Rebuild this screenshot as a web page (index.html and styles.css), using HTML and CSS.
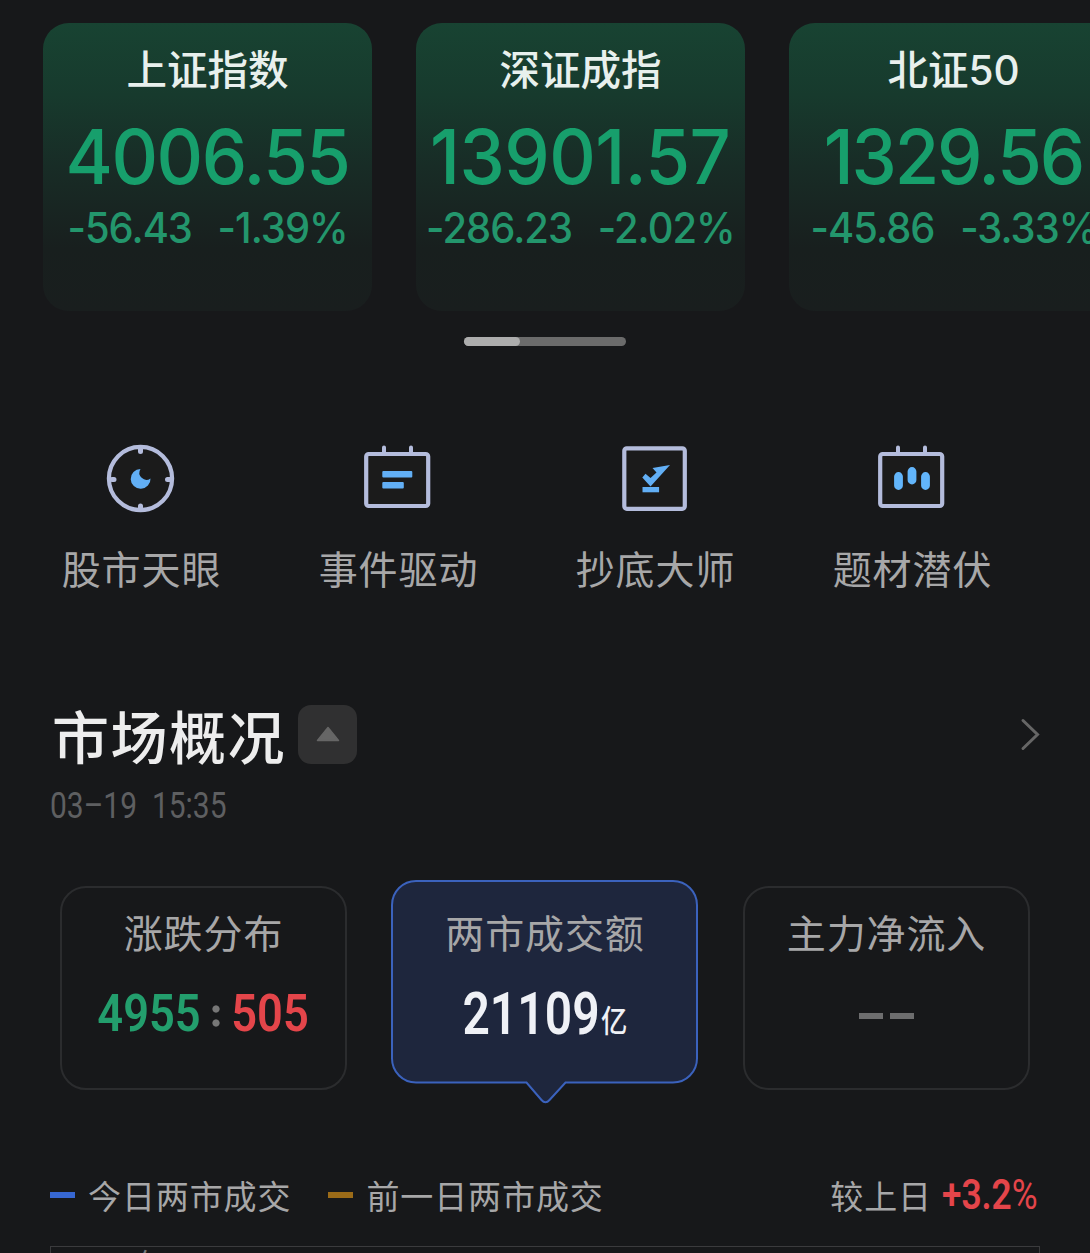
FILE: index.html
```html
<!DOCTYPE html>
<html lang="zh-CN">
<head>
<meta charset="utf-8">
<title>市场概况</title>
<link rel="stylesheet" href="styles.css">
</head>
<body>
<main class="page">
  <section class="indices">
    <article class="index-card">
      <h2 class="index-name">上证指数</h2>
      <div class="index-value"><span>4006.55</span></div>
      <div class="index-change"><span>-56.43</span><span>-1.39%</span></div>
    </article>
    <article class="index-card">
      <h2 class="index-name">深证成指</h2>
      <div class="index-value index-value-long"><span>13901.57</span></div>
      <div class="index-change"><span>-286.23</span><span>-2.02%</span></div>
    </article>
    <article class="index-card">
      <h2 class="index-name">北证50</h2>
      <div class="index-value index-value-tight"><span>1329.56</span></div>
      <div class="index-change"><span>-45.86</span><span>-3.33%</span></div>
    </article>
  </section>
  <div class="scroll-track"><div class="scroll-thumb"></div></div>

  <nav class="tools">
    <a class="tool">
      <svg class="tool-icon" viewBox="0 0 76 76">
        <circle class="frame" cx="38.500" cy="38.500" r="31.600"/>
        <path class="tick" d="M38.500 9.500v2M38.500 66v2M10 39.500h2M65.500 39.500h2"/>
        <path class="fill" d="M38.500 29a9.900 9.900 0 1 0 10 9.400A7 7 0 0 1 38.500 29z"/>
      </svg>
      <span>股市天眼</span>
    </a>
    <a class="tool">
      <svg class="tool-icon" viewBox="0 0 76 76">
        <rect class="frame" x="7.200" y="14" width="62" height="52" rx="2.500"/>
        <path class="pin" d="M25 7.500v6.500M52 7.500v6.500"/>
        <path class="fill" d="M24.300 31h28q1 0 1 1v4.600q0 1-1 1h-28q-1 0-1-1V32q0-1 1-1zM24.300 42h19.500q1 0 1 1v4.400q0 1-1 1H24.300q-1 0-1-1V43q0-1 1-1z"/>
      </svg>
      <span>事件驱动</span>
    </a>
    <a class="tool">
      <svg class="tool-icon" viewBox="0 0 76 76">
        <rect class="frame" x="8.300" y="8.300" width="60.500" height="60.500" rx="2.500"/>
        <path class="fill" d="M26.500 47h16.600v5.300H26.500z"/>
        <path class="fill" d="M26.300 37.500l3.200-3.800 5 4.200 6-5.500-4-4.500 17.500-3-19.500 21.500z"/>
      </svg>
      <span>抄底大师</span>
    </a>
    <a class="tool">
      <svg class="tool-icon" viewBox="0 0 76 76">
        <rect class="frame" x="7.200" y="14" width="62" height="52" rx="2.500"/>
        <path class="pin" d="M25 7.500v6.500M52 7.500v6.500"/>
        <path class="candles" d="M25.500 36.500v9M39 31.500v8.500M52.500 36.500v9"/>
      </svg>
      <span>题材潜伏</span>
    </a>
  </nav>

  <header class="section-head">
    <h1 class="section-title">市场概况</h1>
    <button class="collapse" aria-label="收起">
      <svg viewBox="0 0 24 16" width="24" height="16"><path d="M12 1.500L22.500 14.500H1.500z"/></svg>
    </button>
    <svg class="chevron" viewBox="0 0 20 34" width="20" height="34"><path d="M3 3.500L17.500 17.500 3 31.500"/></svg>
  </header>
  <div class="timestamp"><span>03–19&nbsp; 15:35</span></div>

  <section class="stats">
    <article class="stat">
      <h3 class="stat-name">涨跌分布</h3>
      <div class="ratio"><span class="num up">4955</span><i class="colon"></i><span class="num down">505</span></div>
    </article>
    <article class="stat stat-active">
      <svg class="bubble" viewBox="0 0 308 225" width="308" height="225">
        <path d="M25 1H282a24 24 0 0 1 24 24V178.500a24 24 0 0 1-24 24H174.500L158.500 220q-4 4.500-8 0L135.500 202.500H25a24 24 0 0 1-24-24V25A24 24 0 0 1 25 1z"/>
      </svg>
      <h3 class="stat-name">两市成交额</h3>
      <div class="turnover"><span class="amount">21109</span><span class="unit">亿</span></div>
    </article>
    <article class="stat">
      <h3 class="stat-name">主力净流入</h3>
      <div class="empty"><i></i><i></i></div>
    </article>
  </section>

  <div class="legend">
    <i class="swatch today"></i><span class="legend-text">今日两市成交</span>
    <i class="swatch previous"></i><span class="legend-text">前一日两市成交</span>
    <span class="legend-text compare">较上日</span><span class="delta">+3.2<span class="percent">%</span></span>
  </div>
  <div class="chart"><span class="axis-label">30000亿</span></div>
</main>
</body>
</html>
```
FILE: styles.css
```css
* { box-sizing: border-box; }

body {
  margin: 0;
  background: #17181a;
  color: #a7a7a8;
  font-family: "Noto Sans CJK SC", sans-serif;
}

h1, h2, h3 { margin: 0; }

.page {
  width: 1090px;
  height: 1253px;
  padding-top: 23px;
  overflow: hidden;
}

/* Index cards */
.indices {
  display: flex;
  gap: 44px;
  padding-left: 43px;
}

.index-card {
  flex: 0 0 329px;
  height: 288px;
  padding-top: 22px;
  border-radius: 26px;
  background: linear-gradient(#184332 0%, #173a2d 25%, #182c26 50%, #181f1e 78%, #191e1e 100%);
  display: flex;
  flex-direction: column;
  align-items: center;
}

.index-name {
  color: #e8f0ed;
  font-family: Inter, "Noto Sans CJK SC", sans-serif;
  font-size: 40.500px;
  line-height: 52px;
  font-weight: 500;
  white-space: nowrap;
}

.index-value {
  margin-top: 23px;
  color: #179f6c;
  font: 500 76px/72px Inter, sans-serif;
  letter-spacing: -1.500px;
  white-space: nowrap;
}

.index-value span {
  display: inline-block;
  transform: scaleX(.95);
}

.index-value-long { letter-spacing: -.500px; }
.index-value-tight { letter-spacing: -2.300px; }

.index-change {
  display: flex;
  gap: 27px;
  margin-top: 14px;
  color: #23966c;
  font: 500 42px/44px Inter, sans-serif;
  letter-spacing: -1px;
  white-space: nowrap;
  transform: scaleX(.95);
}

.scroll-track {
  width: 162px;
  height: 9px;
  margin: 26px auto 0;
  border-radius: 5px;
  background: #6b6b6b;
}

.scroll-thumb {
  width: 56px;
  height: 9px;
  border-radius: 5px;
  background: #adadad;
}

/* Shortcuts */
.tools {
  display: grid;
  grid-template-columns: repeat(4, 257px);
  margin: 94px 0 0 13px;
}

.tool {
  display: flex;
  flex-direction: column;
  align-items: center;
  font-size: 39px;
  line-height: 48px;
  letter-spacing: .9px;
}

.tool-icon {
  width: 76px;
  height: 76px;
  margin: 0 3px 27px 0;
}

.frame { fill: #1b1b1b; stroke: #b4bcdc; stroke-width: 4.200; }
.tick { stroke: #b4bcdc; stroke-width: 5; stroke-linecap: round; }
.pin { stroke: #b4bcdc; stroke-width: 4; stroke-linecap: round; }
.fill { fill: #62aff5; }
.candles { stroke: #62b5fb; stroke-width: 8.800; stroke-linecap: round; }

/* Section heading */
.section-head {
  display: flex;
  align-items: center;
  height: 60px;
  margin-top: 113px;
  padding: 0 50px 0 52px;
}

.section-title {
  color: #ededed;
  font-size: 57px;
  line-height: 60px;
  font-weight: 500;
  letter-spacing: 1.500px;
  width: 246px;
  white-space: nowrap;
}

.collapse {
  display: grid;
  place-items: center;
  width: 59px;
  height: 59px;
  padding: 0;
  border: 0;
  border-radius: 13px;
  background: #303031;
}

.collapse path { fill: #666; stroke: #666; stroke-width: 1.500; stroke-linejoin: round; }
.chevron { margin-left: auto; fill: none; stroke: #666; stroke-width: 3; stroke-linecap: round; }

.timestamp {
  margin: 22px 0 0 50px;
  color: #5e5f61;
  font: 400 37px/40px Roboto, sans-serif;
  white-space: nowrap;
}

.timestamp span {
  display: inline-block;
  transform: scaleX(.81);
  transform-origin: left;
}

/* Statistics */
.stats {
  display: flex;
  justify-content: space-between;
  margin-top: 54px;
  padding: 0 60px;
}

.stat {
  position: relative;
  width: 287px;
  height: 204px;
  margin-top: 6px;
  padding-top: 19px;
  border: 2px solid #2b2c2e;
  border-radius: 26px;
  display: flex;
  flex-direction: column;
  align-items: center;
}

.stat-active {
  width: 308px;
  margin-top: 0;
  padding-top: 25px;
  border-color: transparent;
}

.bubble {
  position: absolute;
  left: -2px;
  top: -2px;
}

.bubble path { fill: #1e263d; stroke: #3b62bd; stroke-width: 2; }

.stat-name {
  position: relative;
  font-size: 39px;
  line-height: 48px;
  font-weight: 400;
  letter-spacing: .9px;
  white-space: nowrap;
}

.ratio {
  display: flex;
  align-items: center;
  height: 52px;
  margin-top: 33px;
}

.num {
  font: 600 52px/52px Roboto, sans-serif;
  display: flex;
  justify-content: center;
  white-space: nowrap;
  transform: scaleX(.87);
}

.up { width: 102px; color: #239e6d; }
.down { width: 78px; color: #e4454a; }

.colon {
  width: 31px;
  height: 22px;
  margin-top: 4px;
  background:
    radial-gradient(circle at 16px 4px, #777 3.200px, transparent 4px),
    radial-gradient(circle at 16px 18px, #777 3.200px, transparent 4px);
}

.turnover {
  position: relative;
  display: flex;
  align-items: baseline;
  gap: 2px;
  height: 60px;
  margin-top: 30px;
  color: #eff1f6;
}

.amount {
  display: flex;
  justify-content: center;
  width: 136px;
  font: 600 60px/58px Roboto, sans-serif;
  transform: scaleX(.8);
}

.unit {
  width: 27px;
  font-size: 31px;
  line-height: 28px;
  font-weight: 500;
  transform: translateY(-2px) scaleX(.85);
  transform-origin: left;
}

.empty {
  display: flex;
  gap: 7px;
  margin-top: 58px;
}

.empty i { width: 24px; height: 6px; background: #6d6d6e; }

/* Chart legend */
.legend {
  display: flex;
  align-items: center;
  height: 44px;
  margin-top: 83px;
  padding: 0 52px 0 50px;
}

.swatch { width: 25px; height: 6px; margin-right: 13px; }
.today { background: #3767d2; }
.previous { margin-left: 37px; background: #9b6b18; }
.legend-text { font-size: 33px; line-height: 44px; letter-spacing: .9px; white-space: nowrap; }
.compare { margin-left: auto; }

.delta {
  width: 96px;
  margin-left: 10px;
  color: #e4454a;
  font: 600 42px/44px Roboto, sans-serif;
  transform: scaleX(.84);
  transform-origin: left;
  white-space: nowrap;
}

.percent { font-weight: 400; }

.chart {
  width: 990px;
  height: 200px;
  margin: 29px 0 0 50px;
  padding-top: 3px;
  border: 1px solid #3b3b3d;
}

.axis-label {
  display: block;
  padding-left: 1px;
  color: #77787a;
  font: 400 30px/30px Roboto, "Noto Sans CJK SC", sans-serif;
}
```
